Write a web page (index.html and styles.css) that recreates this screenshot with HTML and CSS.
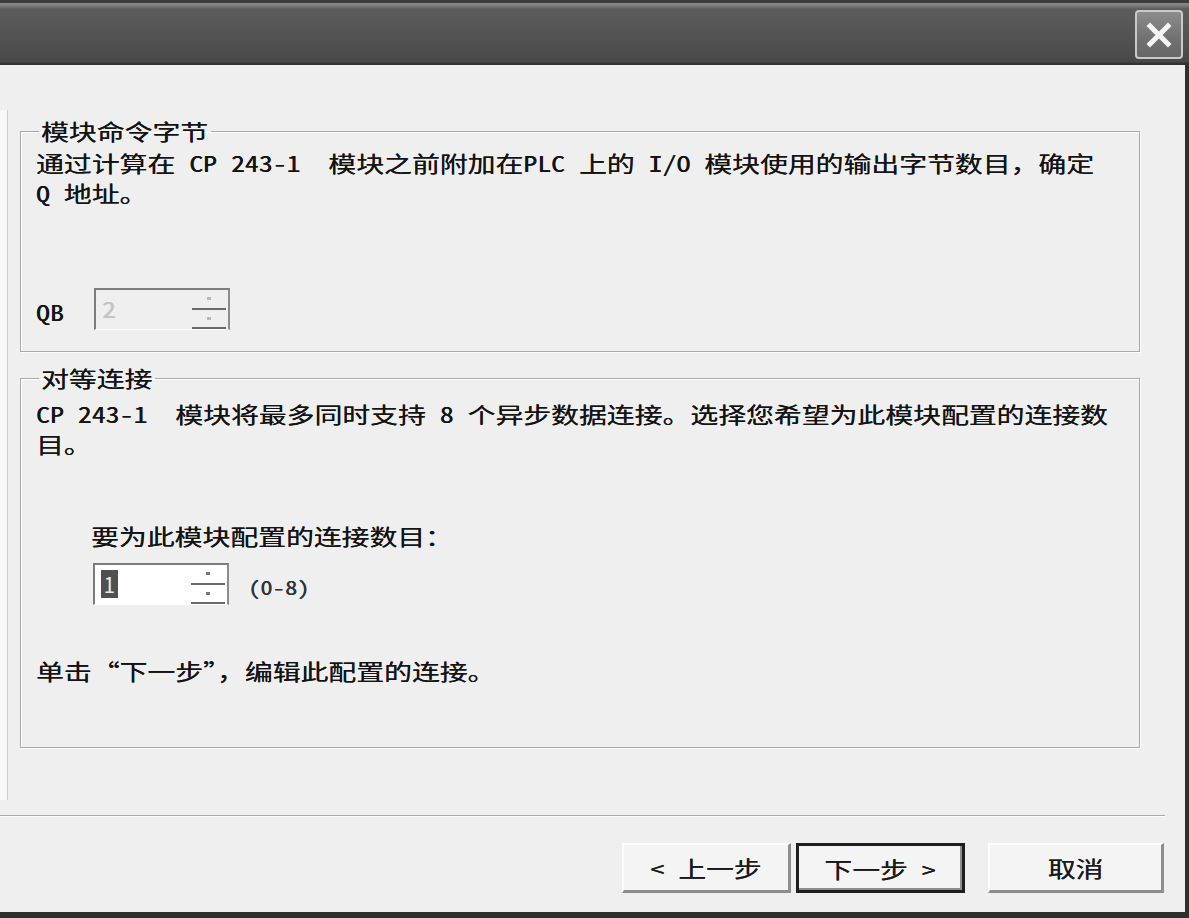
FILE: index.html
```html
<!DOCTYPE html>
<html lang="zh-CN">
<head>
<meta charset="utf-8">
<title>CP 243-1</title>
<link rel="stylesheet" href="styles.css">
</head>
<body>
<div class="window">
  <div class="titlebar">
    <div class="close">
      <svg width="30" height="30" viewBox="0 0 30 30"><path d="M6 6 L24 24 M24 6 L6 24" stroke="#f4f4f4" stroke-width="5" stroke-linecap="square"/></svg>
    </div>
  </div>
  <div class="client">
    <div class="upper">
      <div class="leftstrip"></div>
      <div class="main">
        <fieldset class="group g1">
          <legend class="lg1"><span class="t">模块命令字节</span></legend>
          <p class="desc t">通过计算在 CP 243-1  模块之前附加在PLC 上的 I/O 模块使用的输出字节数目，确定<br>Q 地址。</p>
          <div class="qbrow">
            <span class="qb"><span class="t">QB</span></span>
            <div class="spin disabled">
              <span class="val"><span class="t">2</span></span>
              <div class="btns"><span class="b"><i></i></span><span class="b"><i></i></span></div>
            </div>
          </div>
        </fieldset>
        <fieldset class="group g2">
          <legend class="lg2"><span class="t">对等连接</span></legend>
          <p class="desc t">CP 243-1  模块将最多同时支持 8 个异步数据连接。选择您希望为此模块配置的连接数<br>目。</p>
          <p class="ask t">要为此模块配置的连接数目：</p>
          <div class="connrow">
            <div class="spin">
              <span class="val"><span class="sel">1</span></span>
              <div class="btns"><span class="b"><i></i></span><span class="b"><i></i></span></div>
            </div>
            <span class="range"><span class="t">(0-8)</span></span>
          </div>
          <p class="hint t">单击“下一步”，编辑此配置的连接。</p>
        </fieldset>
      </div>
    </div>
    <div class="sep"></div>
    <div class="buttons">
      <button class="btn"><span class="t c">&lt; 上一步</span></button>
      <button class="btn default"><span class="t c">下一步 &gt;</span></button>
      <button class="btn cancel"><span class="t c">取消</span></button>
    </div>
  </div>
</div>
</body>
</html>
```
FILE: styles.css
```css
html, body {
  margin: 0;
  padding: 0;
  background: #2e2e2e;
}
.window {
  width: 1189px;
  height: 918px;
  box-sizing: border-box;
  padding: 0 4px 6px 0;
  background: #2f2f2f;
  display: flex;
  flex-direction: column;
  font-family: "Noto Sans Mono CJK SC", "Noto Sans CJK SC", "DejaVu Sans Mono", monospace;
  font-size: 21.5px;
  color: #141414;
  overflow: hidden;
}
/* the reference's bitmap font is drawn wider than it is tall */
.t {
  display: inline-block;
  transform: scaleX(1.295);
  transform-origin: left center;
  text-shadow: 0.2px 0 0 currentColor;
}
p.t {
  display: block;
  width: max-content;
}
.t.c { transform-origin: center center; }
.titlebar {
  flex: none;
  height: 65px;
  margin-right: -4px;
  box-sizing: border-box;
  padding: 10px 6px 0 0;
  display: flex;
  justify-content: flex-end;
  align-items: flex-start;
  background: linear-gradient(#3c3c3c 0, #3c3c3c 3px, #8a8a8a 3px, #7a7a7a 6px, #5c5c5c 9px, #525252 40px, #484848 62px, #333 63px, #333 65px);
}
.close {
  width: 48px;
  height: 49px;
  box-sizing: border-box;
  border: 2px solid #c9c9c9;
  border-radius: 4px;
  background: linear-gradient(#8c8c8c, #717171 60%, #666);
  display: flex;
  align-items: center;
  justify-content: center;
}
.client {
  flex: 1;
  background: #efefef;
  display: flex;
  flex-direction: column;
}
.upper {
  display: flex;
  align-items: flex-start;
}
.leftstrip {
  flex: none;
  width: 7px;
  height: 690px;
  margin-top: 45px;
  background: #f8f8f8;
  border-right: 1px solid #cdcdcd;
}
.main {
  padding: 52px 0 0 12px;
  width: 1120px;
}
.group {
  margin: 0;
  box-sizing: border-box;
  width: 1120px;
  padding: 0 0 0 15px;
  border: 1px solid #a9a9a9;
  box-shadow: 1px 1px 0 #fff, inset 1px 1px 0 #fff;
}
.group legend {
  padding: 0 2px;
  margin-left: 3px;
  line-height: 28px;
  height: 28px;
  box-sizing: border-box;
}
.lg1 { width: 172px; }
.lg2 { width: 116px; margin-left: 1px; }
.g1 { height: 235px; }
.g2 { height: 384px; margin-top: 12px; }
.desc {
  margin: 3px 0 0;
  line-height: 30px;
  white-space: pre;
}
.g2 .desc { margin-top: 7px; }
.qbrow {
  margin-top: 80px;
  display: flex;
  align-items: flex-end;
  height: 42px;
}
.qb {
  width: 58px;
  line-height: 36px;
}
.spin {
  width: 136px;
  height: 42px;
  box-sizing: border-box;
  border-top: 2px solid #7c7c7c;
  border-left: 2px solid #7c7c7c;
  border-right: 2px solid #8c8c8c;
  border-bottom: 1px solid #fff;
  background: #fff;
  display: flex;
}
.spin.disabled { background: #efefef; }
.spin .val {
  flex: 1;
  padding-left: 6px;
  line-height: 38px;
  color: #111;
}
.spin.disabled .val { color: #c4c4c4; }
.spin .sel {
  display: inline-block;
  background: #505050;
  color: #e8e8e8;
  line-height: 28px;
  width: 17px;
  text-align: center;
  margin-top: 5px;
  vertical-align: top;
}
.spin .btns {
  width: 34px;
  display: flex;
  flex-direction: column;
  margin-right: 2px;
}
.spin .b {
  flex: 1;
  border-bottom: 2px solid #6a6a6a;
  display: flex;
  align-items: center;
  justify-content: center;
}
.spin .b i {
  width: 4px;
  height: 3px;
  background: #777;
}
.spin.disabled .b i { background: #b8b8b8; }
.ask {
  margin: 62px 0 0 55px;
  line-height: 30px;
}
.connrow {
  margin: 12px 0 0 57px;
  display: flex;
  align-items: center;
}
.range {
  margin-left: 19px;
  font-size: 19px;
  color: #333;
  padding-top: 4px;
}
.hint {
  margin: 51px 0 0;
  line-height: 30px;
}
.sep {
  width: 1165px;
  margin-top: 15px;
  height: 1px;
  background: #a9a9a9;
  border-bottom: 1px solid #fff;
}
.buttons {
  margin-top: 26px;
  display: flex;
  justify-content: flex-end;
  padding-right: 21px;
}
.btn {
  width: 169px;
  height: 50px;
  box-sizing: border-box;
  font: inherit;
  color: #1a1a1a;
  background: #f4f4f4;
  border: none;
  border-top: 2px solid #fdfdfd;
  border-left: 2px solid #fdfdfd;
  border-right: 3px solid #8d8d8d;
  border-bottom: 3px solid #8d8d8d;
  padding: 0;
}
.btn.default {
  margin-left: 5px;
  border: 3px solid #1e1e1e;
  box-shadow: inset -2px -2px 0 #8d8d8d;
}
.btn.cancel {
  margin-left: 23px;
  width: 176px;
}
```
